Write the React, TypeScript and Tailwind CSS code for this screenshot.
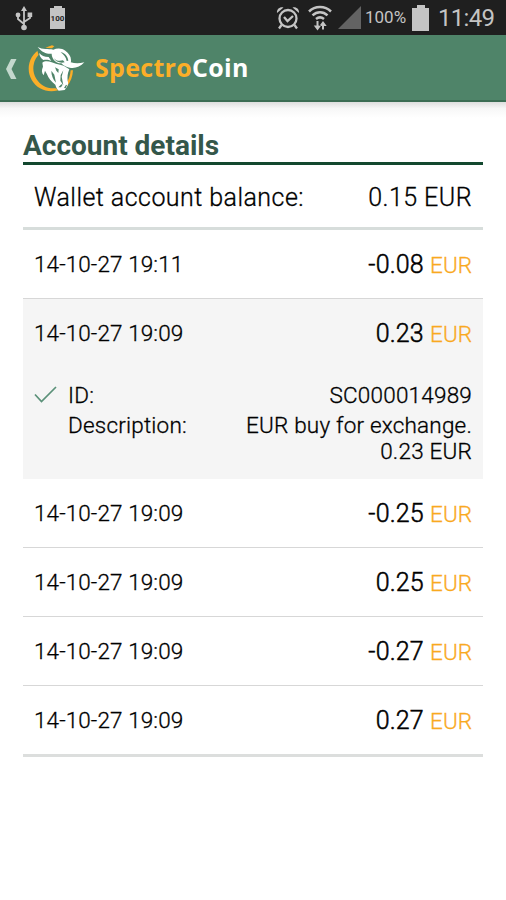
import { useState } from "react";

type Transaction = {
  id: number;
  date: string;
  amount: string;
  currency: string;
  details?: { reference: string; description: string[] };
};

const transactions: Transaction[] = [
  { id: 1, date: "14-10-27 19:11", amount: "-0.08", currency: "EUR" },
  {
    id: 2,
    date: "14-10-27 19:09",
    amount: "0.23",
    currency: "EUR",
    details: { reference: "SC000014989", description: ["EUR buy for exchange.", "0.23 EUR"] },
  },
  { id: 3, date: "14-10-27 19:09", amount: "-0.25", currency: "EUR" },
  { id: 4, date: "14-10-27 19:09", amount: "0.25", currency: "EUR" },
  { id: 5, date: "14-10-27 19:09", amount: "-0.27", currency: "EUR" },
  { id: 6, date: "14-10-27 19:09", amount: "0.27", currency: "EUR" },
];

function UsbIcon() {
  return (
    <svg className="ml-[15px] h-[26px] w-[18px]" viewBox="0 0 18 26" fill="none" stroke="#c4c4c4" strokeWidth="1.8">
      <path d="M9 4v18M3 10v4l6 5M15 10v3l-6 4" />
      <path d="M9 1l3 5H6z" fill="#c4c4c4" stroke="none" />
      <circle cx="9" cy="22.5" r="2.8" fill="#c4c4c4" stroke="none" />
      <circle cx="3" cy="10" r="2.4" fill="#c4c4c4" stroke="none" />
      <path d="M12.6 7.5h4.6v4.6h-4.6z" fill="#c4c4c4" stroke="none" />
    </svg>
  );
}

function AlarmIcon() {
  return (
    <svg className="h-6 w-6" viewBox="0 0 24 24" fill="none" stroke="#c4c4c4" strokeWidth="2.3">
      <circle cx="12" cy="12.5" r="8.5" />
      <path d="M8 11l3.500 4 5.500-5M5.500 19l-2.500 3.500M18.500 19l2.500 3.500" />
      <path d="M1 7C.5 3 4 .5 7.500 1.500zM23 7c.5-4-3-6.500-6.500-5.500z" fill="#c4c4c4" stroke="none" />
    </svg>
  );
}

function WifiIcon() {
  return (
    <svg className="ml-[8px] h-[26px] w-6" viewBox="0 0 24 26" fill="none" stroke="#c4c4c4" strokeWidth="2.5">
      <path d="M1 6.500c6-6 16-6 22 0M4.500 10.300c4.500-4.200 10.500-4.200 15 0M8 14c2.500-2 5.500-2 8 0" />
      <path d="M9.500 16v6M15 24.500v-6" strokeWidth="2" />
      <path d="M5.800 20.500h7.400l-3.700 5zM11.300 21h7.400L15 16z" fill="#c4c4c4" stroke="none" />
    </svg>
  );
}

function StatusBar() {
  return (
    <div className="flex h-[35px] items-center bg-[#1f1f1f] text-[#c4c4c4]">
      <UsbIcon />
      <div className="ml-[17px] flex flex-col items-center">
        <div className="h-[2px] w-[8px] bg-[#c4c4c4]" />
        <div className="flex h-[21px] w-[15px] items-center justify-center bg-[#c4c4c4] text-[8px] font-bold leading-none text-[#1f1f1f]">
          100
        </div>
      </div>
      <div className="ml-auto flex items-center">
        <AlarmIcon />
        <WifiIcon />
        <svg className="ml-[6px] h-[23px] w-[23px]" viewBox="0 0 23 23">
          <path d="M23 0v23H0z" fill="#636363" />
        </svg>
        <span className="ml-[4px] w-[40px] whitespace-nowrap text-[17px]">100%</span>
        <div className="ml-[7px] flex flex-col items-center">
          <div className="h-[3px] w-[8px] bg-[#c4c4c4]" />
          <div className="h-[23px] w-[17px] bg-[#c4c4c4]" />
        </div>
        <span className="ml-[9px] mr-[12px] w-[56px] whitespace-nowrap text-[24px] tracking-[-0.700px]">11:49</span>
      </div>
    </div>
  );
}

function BullLogo() {
  return (
    <svg className="ml-[10px] h-[50px] w-[60px]" viewBox="80 129 180 150">
      {/* coin rim, thicker on the left */}
      <path
        d="M153 138a68 68 0 1 0 .1 0zM159 145a60 60 0 1 1-.1 0z"
        fill="#fbae28"
        fillRule="evenodd"
      />
      {/* clears the rim around the head */}
      <path d="M106 136l60-4 40 6 20 42-5 48-16 42-30 2-22-20-24-32-8-35z" fill="#4f8469" />
      <path d="M211 211c-1 16-6 29-14 41l3 7c11-13 17-29 18-48z" fill="#fbae28" />
      <path d="M135 143l20-7 7 3-7 6z" fill="#fbae28" />
      <g fill="#fff">
        {/* horns and poll */}
        <path d="M112 141c14 8 31 5 47 8 11-5 26-5 36 3 10 8 17 16 17 28 0 5 0 6-1 7 12 3 24 4 41 0-12 14-29 19-44 16-11-2-19-7-25-13-9 0-18-4-23-11-4-6-6-12-6-18-14 1-28-2-42-20z" />
        {/* ear */}
        <path d="M117 159c6 8 15 12 28 12l8 12c-7-3-14-5-24-3-8-5-12-13-12-21z" />
        {/* face */}
        <path d="M126 188c8-6 19-4 28-1 9 3 17 7 25 7l11 3 17 11c-6 13-6 24-5 35 3 6 1 14-4 20l-5 7-18 2c-5-4-8-11-10-18-12-9-21-20-25-31l-6-11-4 14c-6-7-7-16-2-26z" />
      </g>
      <g fill="#4f8469">
        <path d="M181 157c13 2 21 12 23 25l-5 1c-2-11-9-20-18-26z" />
        <path d="M160 174c7 9 18 10 28 7l5 6c-13 3-27-1-33-13z" />
        <path d="M164 202l11 6-1 11-6-7z" />
        <path d="M153 212l9 12 5 24c-9-10-14-22-14-36z" />
        <path d="M189 211l-5 19 5 26-9-14 1-17z" />
        <path d="M174 262l9-9 4 1-5 8zM191 264l6-10 3 2-4 9z" />
      </g>
    </svg>
  );
}

function AppBar() {
  return (
    <header className="flex h-[67px] items-center border-b-2 border-[#3c6d54] bg-[#4f8469]">
      <svg className="ml-[6px] mt-[2px] h-[20px] w-[11px]" viewBox="0 0 11 20">
        <path d="M5 0h5.500L5.500 10l5 10H5L0 10z" fill="#c3d8cd" />
      </svg>
      <BullLogo />
      <span className="ml-[8px] whitespace-nowrap font-['Open_Sans'] text-[25px] font-bold tracking-[0.300px] text-[#fbae28]">
        Spectro<span className="text-white">Coin</span>
      </span>
    </header>
  );
}

function TransactionRow({ item, isOpen, onToggle }: { item: Transaction; isOpen: boolean; onToggle: () => void }) {
  return (
    <li className={isOpen ? "bg-[#f5f5f5]" : "border-b border-[#d7d7d7] last:border-b-0"}>
      <button type="button" onClick={onToggle} className="flex h-[68px] w-full items-center justify-between pl-[11px] pr-[11px] pt-[2px]">
        <span className="text-[22.500px] font-light tracking-[0.100px] [-webkit-text-stroke:0.3px]">{item.date}</span>
        <span className="text-[25px] font-light tracking-[0.150px] [-webkit-text-stroke:0.5px]">
          {item.amount}{" "}
          <span className="text-[22.500px] text-[#f9a91f] tracking-normal [-webkit-text-stroke:0.3px]">{item.currency}</span>
        </span>
      </button>
      {isOpen && item.details && (
        <div className="flex h-[112px] pl-[11px] pr-[11px] pt-[15px] text-[22.500px] font-light leading-[26px] tracking-[0.200px] [-webkit-text-stroke:0.3px]">
          <svg className="mt-[4px] h-[17px] w-[23px]" viewBox="0 0 23 17" fill="none" stroke="#5b9179" strokeWidth="1.700">
            <path d="M1 8.500l6.500 7L22 1" />
          </svg>
          <dl className="ml-[11px] grid flex-1 grid-cols-[auto_1fr] content-start gap-y-[4px]">
            <dt>ID:</dt>
            <dd className="text-right">{item.details.reference}</dd>
            <dt>Description:</dt>
            <dd className="text-right">
              {item.details.description.map((line) => (
                <span key={line} className="block">{line}</span>
              ))}
            </dd>
          </dl>
        </div>
      )}
    </li>
  );
}

export default function App() {
  const [openId, setOpenId] = useState<number | null>(2);

  return (
    <div className="h-[900px] w-[506px] overflow-hidden bg-white font-[Roboto,sans-serif] text-black">
      <StatusBar />
      <AppBar />
      <div className="h-[16px] bg-gradient-to-b from-[#dedede] via-[#f7f7f7] via-40% to-white" />
      <main className="px-[23px]">
        <h1 className="h-[47px] border-b-[3px] border-[#13482f] pt-[12px] text-[28px] font-bold leading-[32px] text-[#34574a]">
          Account details
        </h1>
        <div className="flex h-[65px] items-center justify-between border-b-[3px] border-[#d7dddb] px-[11px] pt-[4px] text-[25px] font-light tracking-[0.450px] [-webkit-text-stroke:0.3px]">
          <span>Wallet account balance:</span>
          <span>0.15 EUR</span>
        </div>
        <ul className="border-b-[3px] border-[#dcdedd]">
          {transactions.map((item) => (
            <TransactionRow
              key={item.id}
              item={item}
              isOpen={openId === item.id}
              onToggle={() => setOpenId((prev) => (prev === item.id ? null : item.id))}
            />
          ))}
        </ul>
      </main>
    </div>
  );
}
